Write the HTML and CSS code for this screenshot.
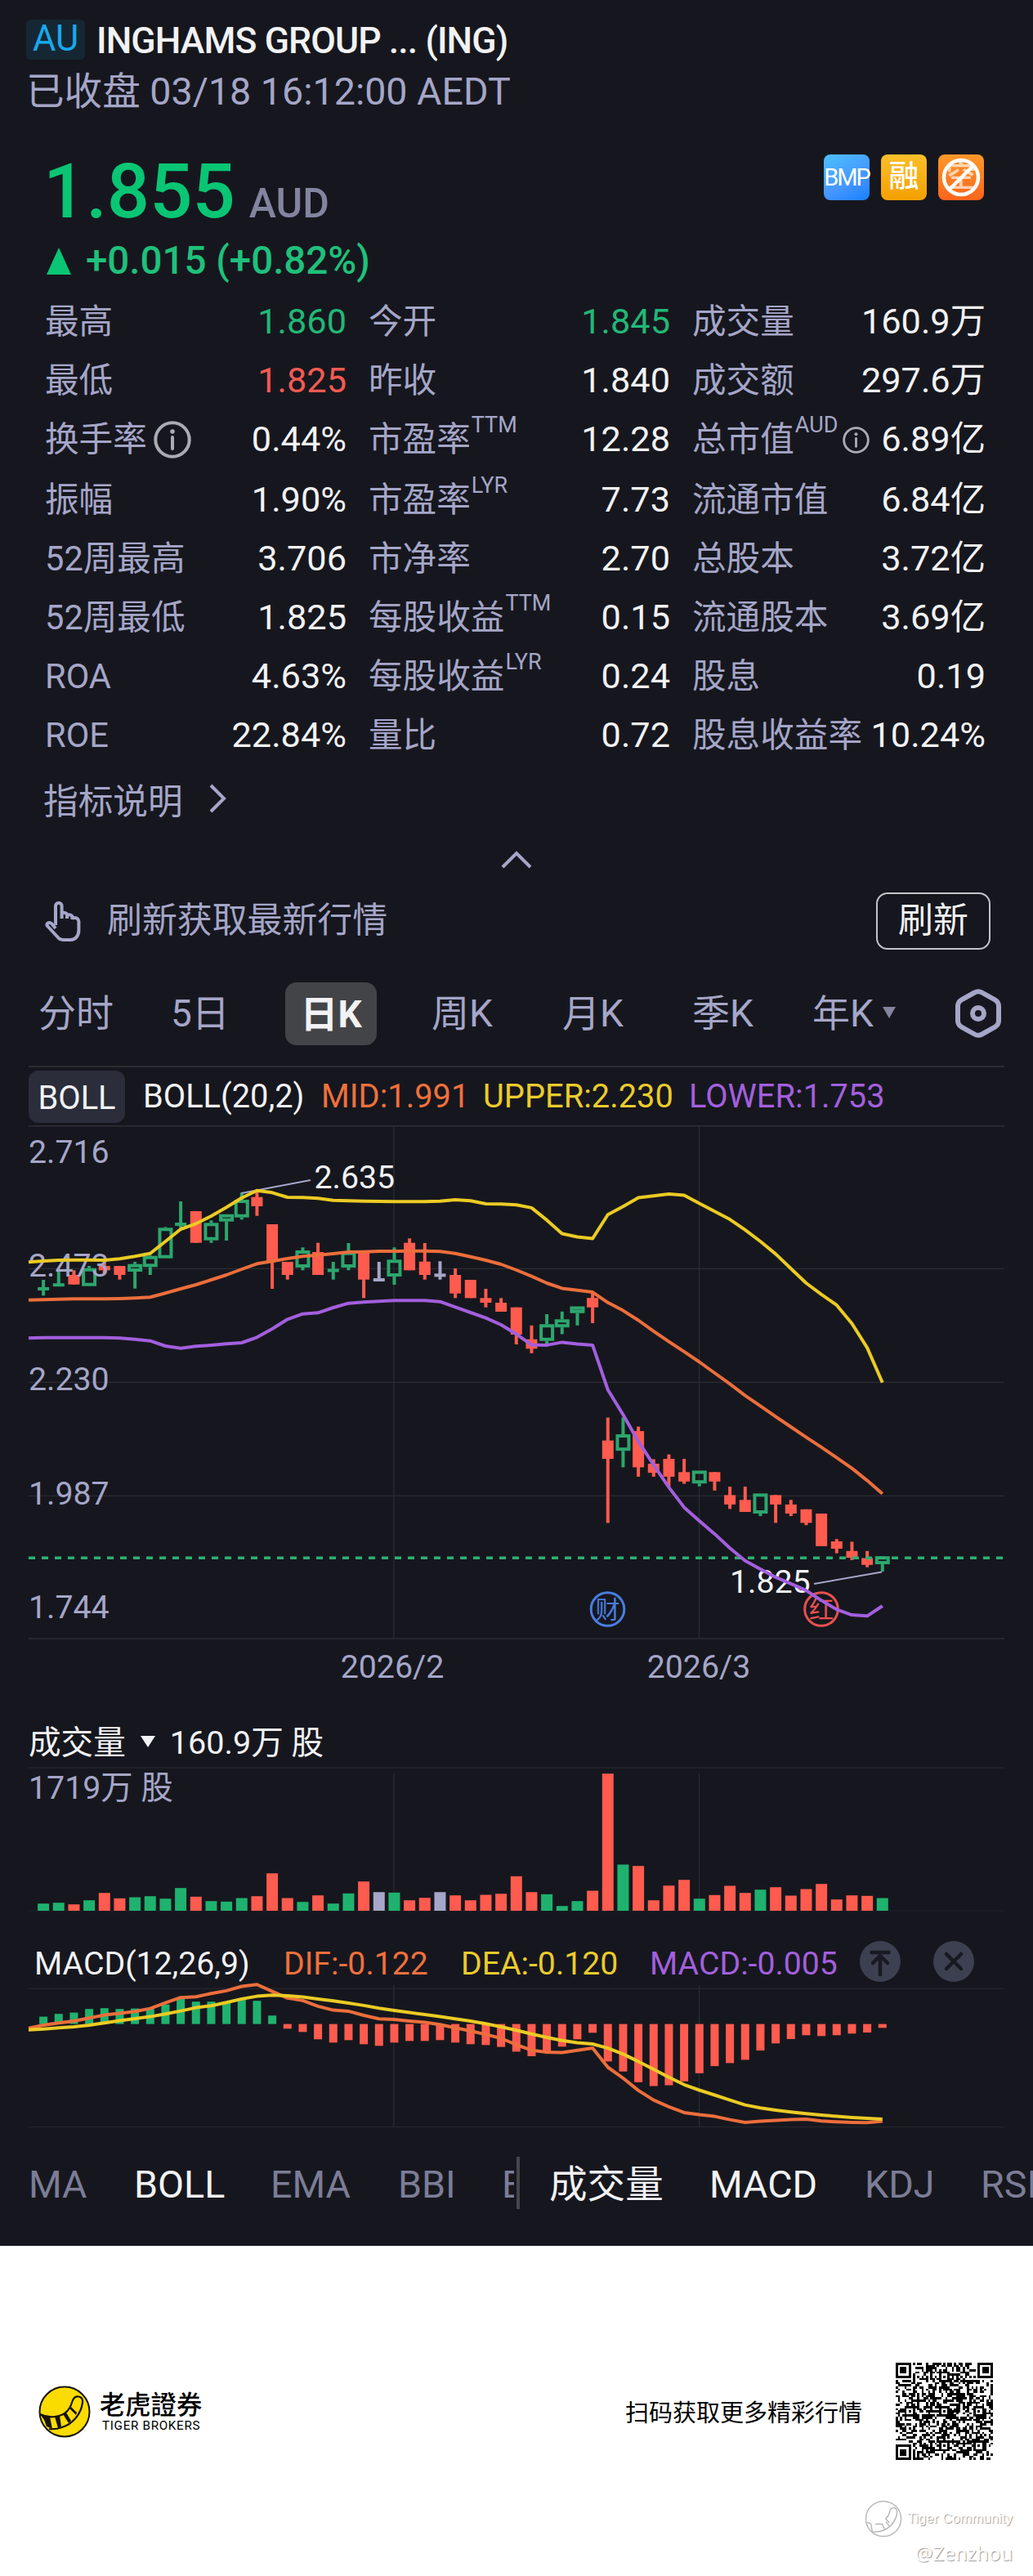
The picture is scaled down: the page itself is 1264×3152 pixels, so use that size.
FILE: index.html
```html
<!DOCTYPE html>
<html lang="zh-CN">

<head>
    <meta charset="UTF-8">
    <meta name="viewport" content="width=device-width, initial-scale=1.0">
    <title>INGHAMS GROUP (ING)</title>
    <link rel="stylesheet" href="styles.css">
</head>

<body>
    <div class="quote-page">
        <div class="header">
            <div class="title-row">
                <span class="market">AU</span>
                <h1>INGHAMS GROUP ... (ING)</h1>
            </div>
            <div class="status">已收盘 03/18 16:12:00 AEDT</div>
        </div>

        <div class="price-box">
            <div class="price-row">
                <span class="price">1.855</span>
                <span class="currency">AUD</span>
                <div class="badges">
                    <span class="badge blue">BMP</span>
                    <span class="badge gold">融</span>
                    <span class="badge orange">
                        <span class="short">空</span>
                        <svg viewBox="0 0 56 56"><circle cx="28" cy="28" r="21" /><path d="M42.5 14 14 42.5" /></svg>
                    </span>
                </div>
            </div>
            <div class="change">
                <svg width="30" height="33" viewBox="0 0 30 33"><path d="M15 0 30 33H0Z" fill="#09c574" /></svg>
                <span>+0.015 (+0.82%)</span>
            </div>
        </div>

        <div class="stats">
            <div class="stat"><span>最高</span><b class="up">1.860</b></div>
            <div class="stat"><span>今开</span><b class="up">1.845</b></div>
            <div class="stat"><span>成交量</span><b>160.9万</b></div>
            <div class="stat"><span>最低</span><b class="down">1.825</b></div>
            <div class="stat"><span>昨收</span><b>1.840</b></div>
            <div class="stat"><span>成交额</span><b>297.6万</b></div>
            <div class="stat"><span>换手率</span><svg class="info" viewBox="0 0 46 46"><circle cx="23" cy="23" r="20.7" /><circle class="dot" cx="23" cy="13" r="2.8" /><path d="M23 20v14" /></svg><b>0.44%</b></div>
            <div class="stat"><span>市盈率<sup>TTM</sup></span><b>12.28</b></div>
            <div class="stat"><span>总市值<sup>AUD</sup></span><svg class="info small" viewBox="0 0 46 46"><circle cx="23" cy="23" r="20.7" /><circle class="dot" cx="23" cy="13" r="2.8" /><path d="M23 20v14" /></svg><b>6.89亿</b></div>
            <div class="stat"><span>振幅</span><b>1.90%</b></div>
            <div class="stat"><span>市盈率<sup>LYR</sup></span><b>7.73</b></div>
            <div class="stat"><span>流通市值</span><b>6.84亿</b></div>
            <div class="stat"><span>52周最高</span><b>3.706</b></div>
            <div class="stat"><span>市净率</span><b>2.70</b></div>
            <div class="stat"><span>总股本</span><b>3.72亿</b></div>
            <div class="stat"><span>52周最低</span><b>1.825</b></div>
            <div class="stat"><span>每股收益<sup>TTM</sup></span><b>0.15</b></div>
            <div class="stat"><span>流通股本</span><b>3.69亿</b></div>
            <div class="stat"><span>ROA</span><b>4.63%</b></div>
            <div class="stat"><span>每股收益<sup>LYR</sup></span><b>0.24</b></div>
            <div class="stat"><span>股息</span><b>0.19</b></div>
            <div class="stat"><span>ROE</span><b>22.84%</b></div>
            <div class="stat"><span>量比</span><b>0.72</b></div>
            <div class="stat"><span>股息收益率</span><b>10.24%</b></div>
        </div>

        <div class="explain">
            <span>指标说明</span>
            <svg width="22" height="38" viewBox="0 0 22 38"><path d="M3 3 19 19 3 35" /></svg>
        </div>
        <div class="collapse">
            <svg width="38" height="22" viewBox="0 0 38 22"><path d="M2 20 19 3 36 20" /></svg>
        </div>

        <div class="refresh">
            <svg width="44" height="50" viewBox="0 0 44 50"><path d="M13 30V6.500a3.800 3.800 0 0 1 7.600 0V22M20.600 21v-5.500q3.200-2 6.400 1V22M27 21v-3q3.200-2 6.400 1v4M33.400 21.500q7-2 8 4V36c0 7-4 12-10 12H22c-3 0-5-1-7-4L2.500 30.500C2 27 6 26 8.500 28.500L13 34" /></svg>
            <span>刷新获取最新行情</span>
            <button>刷新</button>
        </div>

        <div class="periods">
            <span>分时</span>
            <span>5日</span>
            <span class="active">日K</span>
            <span>周K</span>
            <span>月K</span>
            <span>季K</span>
            <span class="more">年K<svg width="18" height="14" viewBox="0 0 18 14"><path d="M1 0H17L9 14Z" fill="#83849f" /></svg></span>
            <svg class="hex" width="58" height="60" viewBox="0 0 58 60"><path d="M24.500 4.500q4.500-2.500 9 0L49 13q5 3 5 8v18q0 5-5 8l-15.500 8.500q-4.500 2.500-9 0L9 47q-5-3-5-8V21q0-5 5-8Z" /><circle cx="29" cy="30" r="7" /></svg>
        </div>

        <div class="legend boll">
            <span class="tag">BOLL</span>
            <span>BOLL(20,2)</span>
            <span class="mid">MID:1.991</span>
            <span class="upper">UPPER:2.230</span>
            <span class="lower">LOWER:1.753</span>
        </div>
        <svg id="kline" width="1264" height="703" viewBox="0 0 1264 703"></svg>

        <div class="volume-title">
            <span>成交量</span>
            <svg width="18" height="14" viewBox="0 0 18 14"><path d="M0 0H18L9 14Z" fill="#f2f2f4" /></svg>
            <span>160.9万 股</span>
        </div>
        <svg id="volume" width="1264" height="196" viewBox="0 0 1264 196"></svg>

        <div class="legend macd">
            <span>MACD(12,26,9)</span>
            <span class="mid">DIF:-0.122</span>
            <span class="upper">DEA:-0.120</span>
            <span class="lower">MACD:-0.005</span>
            <svg width="50" height="50" viewBox="0 0 50 50"><circle cx="25" cy="25" r="25" /><path d="M14.500 14h21M25 41V19M16 27l9-9 9 9" /></svg>
            <svg width="50" height="50" viewBox="0 0 50 50"><circle cx="25" cy="25" r="25" /><path d="m16 16 18 18M34 16 16 34" /></svg>
        </div>
        <svg id="macd" width="1264" height="190" viewBox="0 0 1264 190"></svg>

        <div class="indicators">
            <div class="main">
                <span>MA</span>
                <span class="on">BOLL</span>
                <span>EMA</span>
                <span>BBI</span>
                <span class="cut">ENE</span>
            </div>
            <div class="sub">
                <span class="on">成交量</span>
                <span class="on">MACD</span>
                <span>KDJ</span>
                <span class="cut">RSI</span>
            </div>
        </div>
    </div>

    <div class="footer">
        <div class="brand">
            <svg width="64" height="64" viewBox="0 0 64 64">
                <circle cx="32" cy="32" r="30.500" fill="#fbdc00" stroke="#17130b" stroke-width="2" />
                <path d="M2 35C12 40 24 39 32 34C38 30 40 24 42 18C45 11 55 12 54 21C52 35 42 47 29 51Q21 54 13 53" fill="none" stroke="#17130b" stroke-width="2.200" />
                <path d="M2 35 14 38 17 53 10 50 7 42ZM20 38 26 37 28 50 24 52ZM30 35 34 33 40 43 37 46ZM38 28 40 26 47 33 46 36Z" fill="#17130b" />
            </svg>
            <div class="brand-name">
                <strong>老虎證券</strong>
                <span>TIGER BROKERS</span>
            </div>
        </div>
        <div class="scan">
            <span>扫码获取更多精彩行情</span>
            <svg id="qr" width="119" height="119" viewBox="0 0 45 45" shape-rendering="crispEdges"></svg>
        </div>
        <div class="watermark">
            <div class="community">
                <svg width="46" height="46" viewBox="0 0 64 64"><circle cx="32" cy="32" r="30" /><path d="M4 39q6-1 7 3l2 12q18 2 31-10c10-10 13-23 10-28s-10-3-11 3-5 11-7 13l6 7M18 41h12l5 10M36 37l6 7" /></svg>
                <span>Tiger Community</span>
            </div>
            <div class="author">@Zenzhou</div>
        </div>
    </div>

    <script src="chart.js"></script>
</body>

</html>
```
FILE: styles.css
```css
* {
    box-sizing: border-box;
}

body {
    margin: 0;
    width: 1264px;
    background-color: #fff;
    font-family: Roboto, "Noto Sans CJK SC", sans-serif;
    overflow-x: hidden;
}

svg {
    display: block;
    flex-shrink: 0;
}

.quote-page {
    height: 2748px;
    background-color: #16171e;
    color: #f2f2f4;
    overflow: hidden;
}

.header {
    height: 170px;
    padding: 24px 32px 0;
}

.title-row {
    display: flex;
    align-items: center;
    height: 49px;
}

.market {
    width: 72px;
    height: 49px;
    margin-right: 14px;
    border-radius: 6px;
    background-color: #152733;
    color: #18a8ee;
    font-size: 43.5px;
    line-height: 47px;
    text-align: center;
}

h1 {
    margin: 0;
    padding-top: 3px;
    font-size: 44.5px;
    font-weight: 500;
    line-height: 49px;
    letter-spacing: -0.9px;
}

.status {
    margin-top: 12px;
    color: #a5a6c8;
    font-size: 46.6px;
    line-height: 54px;
}

.price-box {
    height: 188px;
    padding: 0 57px;
}

.price-row {
    display: flex;
    align-items: baseline;
    height: 120px;
    line-height: 130px;
}

.price {
    margin-left: -4px;
    color: #09c574;
    font-size: 92px;
    font-weight: 500;
}

.currency {
    margin-left: 17px;
    color: #83849f;
    font-size: 50px;
    font-weight: 500;
}

.badges {
    display: flex;
    align-self: flex-start;
    gap: 14px;
    margin: 19px 3px 0 auto;
}

.badge {
    position: relative;
    width: 56px;
    height: 56px;
    border-radius: 8px;
    color: #fff;
    font-size: 37px;
    font-weight: 500;
    line-height: 56px;
    text-align: center;
}

.blue {
    background: linear-gradient(150deg, #4dc0fa, #4596ff 60%, #1780ff);
    font-size: 29px;
    font-weight: 400;
    letter-spacing: -2px;
}

.gold {
    background: linear-gradient(#fbbf2b, #f4a000);
}

.orange {
    background: linear-gradient(#ff9828, #fb651c);
}

.short {
    opacity: 0.65;
}

.badge svg {
    position: absolute;
    top: 0;
    left: 0;
    fill: none;
    stroke: #fff;
    stroke-width: 4.5;
}

.change {
    display: flex;
    align-items: center;
    height: 58px;
    color: #1fc07b;
    font-size: 47.5px;
    font-weight: 500;
    line-height: 56px;
}

.change span {
    margin-left: 18px;
}

.stats {
    display: grid;
    grid-template-columns: 369px 369px 359px;
    grid-template-rows: 72px 72px 74px repeat(5, 72px);
    column-gap: 27px;
    padding-left: 55px;
}

.stat {
    display: flex;
    align-items: baseline;
    height: 72px;
    color: #a5a6c8;
    font-size: 41.6px;
    line-height: 72px;
    white-space: nowrap;
}

.stat b {
    margin-left: auto;
    color: #f2f2f4;
    font-size: 43.3px;
    font-weight: 400;
}

.stat .up {
    color: #22b877;
}

.stat .down {
    color: #f35b52;
}

.stat sup {
    position: relative;
    top: -23px;
    margin-left: 1px;
    font-size: 27px;
    line-height: 0;
    vertical-align: baseline;
}

.info {
    align-self: center;
    width: 46px;
    height: 46px;
    margin-left: 8px;
    fill: none;
    stroke: #a9abb5;
    stroke-width: 4;
    stroke-linecap: round;
}

.info .dot {
    fill: #a9abb5;
    stroke: none;
}

.info.small {
    width: 33px;
    height: 33px;
    margin-left: 6px;
}

.explain {
    display: flex;
    align-items: center;
    height: 90px;
    margin-top: -4px;
    padding-left: 53px;
    color: #a5a6c8;
    font-size: 42.7px;
}

.explain svg {
    margin-left: 31px;
}

.explain svg,
.collapse svg {
    fill: none;
    stroke: #a5a6c8;
    stroke-width: 4;
}

.collapse {
    display: flex;
    justify-content: center;
    height: 70px;
    padding-top: 19px;
}

.refresh {
    display: flex;
    align-items: center;
    height: 70px;
    padding: 0 52px 0 55px;
    color: #a5a6c8;
    font-size: 42.9px;
    line-height: 62px;
}

.refresh span {
    padding-bottom: 2px;
}

.refresh svg {
    margin-right: 32px;
    fill: none;
    stroke: #a5a6c8;
    stroke-width: 4;
    stroke-linejoin: round;
}

.refresh button {
    width: 140px;
    height: 70px;
    margin-left: auto;
    padding: 0 0 2px;
    border: 2px solid #c4c4c8;
    border-radius: 14px;
    background: none;
    color: #f2f2f4;
    font: inherit;
}

.periods {
    display: grid;
    grid-template-columns: 162px 140px 179px 160px 159px 147px 174px 60px;
    align-items: center;
    height: 142px;
    padding: 14px 0 0 47px;
    color: #a5a6c8;
    font-size: 46px;
    line-height: 79px;
}

.periods .active {
    width: 112px;
    height: 77px;
    border-radius: 14px;
    background-color: #434448;
    color: #f2f2f4;
    font-weight: 700;
    text-align: center;
}

.more {
    display: flex;
    align-items: center;
}

.more svg {
    margin: -2px 0 0 10px;
}

.hex {
    fill: none;
    stroke: #a5a6c8;
    stroke-width: 6;
}

.legend {
    display: grid;
    align-items: center;
    font-size: 39.2px;
    white-space: nowrap;
}

.boll {
    grid-template-columns: 140px 218px 198px 252px 300px;
    height: 73px;
    margin-left: 35px;
    margin-right: 35px;
    border-top: 2px solid #2b2c32;
    font-size: 39.8px;
    line-height: 68px;
}

.boll .tag {
    width: 118px;
    height: 64px;
    border-radius: 12px;
    background-color: #2b2d3b;
    line-height: 67px;
    text-align: center;
}

.mid {
    color: #f0713c;
}

.upper {
    color: #ebcc2c;
}

.lower {
    color: #a35fde;
}

#kline text,
#volume text {
    fill: #a5a6c8;
    font-size: 39.3px;
}

#kline .mark {
    fill: #f2f2f4;
}

.volume-title {
    display: flex;
    align-items: center;
    height: 82px;
    padding: 23px 0 0 35px;
    font-size: 39.6px;
    line-height: 60px;
}

.volume-title svg {
    margin: -3px 18px 0;
}

.macd {
    grid-template-columns: 305px 217px 231px 257px 90px 60px;
    height: 52px;
    margin: 16px 0 -7px 42px;
}

.macd span {
    padding-top: 6px;
}

.legend circle {
    fill: #3d4050;
}

.legend path {
    fill: none;
    stroke: #181922;
    stroke-width: 4.5;
    stroke-linecap: round;
}

.indicators {
    display: flex;
    height: 64px;
    margin-top: 30px;
    color: #7c7d97;
    font-size: 46.6px;
    line-height: 68px;
}

.main,
.sub {
    display: grid;
    overflow: hidden;
    white-space: nowrap;
}

.main {
    grid-template-columns: 129px 167px 156px 127px 15px;
    width: 636px;
    padding-left: 35px;
    border-right: 4px solid #45464c;
}

.sub {
    grid-template-columns: 196px 190px 142px 64px;
    width: 628px;
    padding-left: 36px;
}

.cut {
    overflow: hidden;
}

.on {
    color: #f2f2f4;
}

.footer {
    height: 404px;
    padding: 143px 49px 0 47px;
    display: grid;
    grid-template-columns: 1fr auto;
    grid-template-rows: 119px 1fr;
    color: #000;
}

.brand,
.scan {
    display: flex;
    align-items: center;
}

.brand-name {
    margin-left: 11px;
    padding-bottom: 2px;
}

.brand-name strong {
    display: block;
    font-family: "Noto Sans CJK TC", sans-serif;
    font-size: 31.3px;
    font-weight: 500;
    line-height: 36px;
}

.brand-name span {
    display: block;
    margin-left: 3px;
    font-size: 15.2px;
    letter-spacing: 0.7px;
    line-height: 18px;
}

.scan span {
    margin-right: 41px;
    padding-bottom: 2px;
    font-size: 29px;
}

.watermark {
    grid-column: 1 / 3;
    margin: 49px -24px 0 0;
    color: #fff;
    text-align: right;
    text-shadow: 1px 1px 1px #999;
}

.community {
    display: flex;
    align-items: center;
    justify-content: flex-end;
    font-family: "Liberation Sans", sans-serif;
    font-size: 17px;
}

.community svg {
    margin-right: 6px;
    fill: none;
    stroke: #b8b8b8;
    stroke-width: 2;
}

.author {
    font-family: "Noto Sans", sans-serif;
    font-size: 24px;
    line-height: 38px;
}
```
FILE: chart.js
```javascript
const GREEN = '#1fb26e';
const RED = '#ff5b4e';
const GREY = '#a5a6c8';
const FIRST_X = 53.1;
const STEP = 18.667;

// g = up, r = down, n = unchanged
const trend = 'ggrgrrggggrgggrrrgrggrngrrnrrrrrrgggrrgrrrrgrrrgrrrrrrrg';

// high, body top, body bottom, low
const candles = [
    [189, 198.3, 201.7, 208.3], [176.3, 193.7, 196.7, 196.7], [177.3, 183, 194.7, 194.7], [172, 174.7, 196.7, 196.7],
    [166.3, 172, 177.3, 181.3], [172, 172, 183, 188.7], [167, 169.7, 179, 199.7], [158.7, 159.7, 173.3, 183],
    [124.3, 125.3, 162.7, 162.7], [93, 119.3, 122.7, 125.3], [105, 105, 143.7, 143.7], [116.3, 119.3, 140.7, 143.7],
    [108.7, 108.7, 117.7, 141], [82.3, 91, 112.7, 115.3], [81.3, 87.7, 99, 110.7], [121, 121, 167, 200],
    [167, 167, 183, 188.7], [149.3, 153, 174, 177.3], [143.7, 155, 183, 183], [167, 176, 179, 188.7],
    [144, 154.7, 174, 177.3], [154.7, 154.7, 188.7, 211.3], [167, 187.3, 190.7, 190.7], [149.3, 164.3, 185, 195],
    [138.3, 143.7, 177.3, 177.3], [144, 166.7, 183, 188.7], [166.3, 181.7, 185, 188.7], [175, 183, 205.7, 211.3],
    [189, 189, 211.3, 211.3], [200, 211.3, 217, 222.7], [211.3, 217, 228, 228], [222.7, 222.7, 256, 268],
    [244.8, 261.8, 273.3, 278.8], [231, 243.3, 263.8, 267], [227.8, 237.3, 247.2, 255.5], [221.5, 221.5, 229.8, 244.8],
    [205.3, 211.2, 222.7, 242], [357.5, 385.6, 408.1, 486.4], [357.5, 378, 398.2, 418.4], [368.6, 374.1, 418.4, 429.9],
    [408.5, 414, 425.1, 429.9], [402.6, 408.1, 429.9, 442.1], [408.1, 424.3, 435.8, 438.6], [422.4, 422.4, 438.2, 441.7],
    [424.3, 424.3, 435.8, 446.9], [442.1, 452.4, 463.9, 469.4], [442.1, 458.3, 473, 473], [450.4, 450.4, 475, 478.1],
    [452.4, 452.4, 463.9, 486.4], [458.3, 463.9, 475, 478.1], [469.8, 469.8, 486.4, 489.2], [475, 475, 514.9, 514.9],
    [506.2, 509, 518, 523.6], [509.4, 520.8, 529.1, 531.9], [520.8, 529.5, 537.8, 540.6], [527.2, 527.2, 537, 546.1]
];

// the lines start one step before the first candle
const upper = [167.3, 166, 165, 164.7, 164.8, 165, 163.3, 160.3, 156.7, 142, 127, 120.3, 111, 100.3, 88.7, 79.7, 82.3, 88, 88.3, 89.3, 91.7, 92.3, 92.7, 93, 93.3, 93.3, 93.3, 92.7, 91, 92.3, 96, 96.3, 97.3, 100.9, 115.9, 132.5, 136.5, 138.5, 109.2, 99.3, 88.6, 86.3, 83.9, 85.5, 95.4, 105.2, 115.1, 127.8, 142, 157.4, 175.2, 193, 206.9, 219.9, 242.5, 272.1, 314.8];
const mid = [213.7, 213.3, 212.7, 212.3, 212.3, 212.3, 212, 211.3, 210.3, 205.3, 200, 195, 189, 183, 176, 169.3, 166.3, 163, 160.3, 158.7, 157, 155, 154.7, 154, 154, 153.7, 153.7, 154.3, 156.7, 160.7, 165, 170, 177, 184.7, 193, 199.4, 201.7, 204.1, 216.8, 226.6, 238.5, 251.9, 264.6, 276.9, 289.5, 303, 316.4, 330.6, 343.3, 356.3, 369, 381.6, 393.9, 406.6, 419.6, 434.6, 450.8];
const lower = [260.3, 259.7, 259.7, 259.7, 259.7, 259.7, 260.3, 261.7, 263.7, 270, 272.7, 270.3, 269, 267.3, 266, 259.3, 249, 237.3, 230.7, 229.3, 223, 217.7, 216.3, 215.3, 214.3, 214.3, 214.3, 215.7, 222.3, 229, 235.7, 244, 255.3, 268.6, 268.9, 265.4, 267.4, 268.9, 323.5, 354, 386.8, 415.3, 442.9, 467.4, 484, 499.9, 517.3, 532.7, 543, 552.9, 560.8, 569.1, 581.3, 592.4, 599.1, 600.3, 588];

const volumes = [8.8, 9.8, 7.8, 12.8, 21.8, 15.2, 16.5, 17.8, 14.8, 27.8, 17.2, 11.8, 11.2, 15.5, 17.8, 45.8, 15.5, 10.8, 18.8, 8.8, 21.2, 35.8, 22.8, 22.2, 12.8, 15.8, 22.8, 18.8, 12.8, 19.5, 20.8, 42.2, 22.8, 20.2, 5.8, 11.8, 24.5, 167.8, 56.5, 54.8, 12.8, 30.8, 37.8, 14.8, 19.2, 30.5, 21.8, 25.8, 28.8, 18.5, 26.5, 32.8, 13.8, 18.8, 18.2, 15.5];

const macd = [9, 12.4, 14, 18.4, 19.4, 18.4, 19, 19.5, 24, 30.7, 27.4, 27.4, 25.7, 30, 28.4, 10.4, -5.7, -9.7, -18.7, -22.7, -19.7, -24.7, -26.7, -22.7, -20.7, -20.7, -19.7, -22.7, -24.7, -25.7, -28, -33.8, -39.4, -35.4, -27.7, -18.7, -10.7, -45.8, -58.1, -71.2, -75.9, -74.9, -70.2, -60.2, -51.5, -47.8, -43.8, -32.4, -23.7, -18.4, -13.7, -14.7, -13.7, -11.7, -10.4, -4.7];
const dif = [62.7, 59, 56.3, 54, 50.3, 46.6, 44.6, 42.3, 38.6, 31.6, 25.2, 24.2, 20.2, 16.9, 11.5, 9.2, 17.6, 25.9, 28.9, 35.9, 40.6, 41.9, 47, 51.3, 52, 54, 55.6, 58.3, 62.3, 66, 70.4, 75, 83, 89.7, 92.1, 92.4, 89.7, 87.1, 110.5, 123.8, 138.9, 150.6, 158.9, 165.9, 168.6, 170.6, 174.6, 178, 176.6, 175.6, 174.6, 173.9, 176.3, 177.3, 178, 178.3, 176.6];
const dea = [64.7, 63.7, 62.3, 61, 59, 56.3, 53.6, 51, 48.6, 45.3, 41.6, 37.6, 35.3, 31.3, 26.9, 23.6, 22.2, 22.9, 24.6, 26.9, 29.2, 31.9, 34.9, 38.3, 40.9, 43.6, 46, 48.6, 51.3, 54, 57.3, 61, 65.3, 69.7, 74, 77.7, 80.4, 82, 87.1, 94.4, 103.4, 113.1, 122.8, 131.8, 138.5, 144.5, 150.6, 156.6, 160.2, 162.9, 165.3, 167.3, 168.9, 170.6, 171.9, 172.9, 173.9];

const xAt = i => FIRST_X + STEP * i;
const colorOf = i => ({ g: GREEN, r: RED, n: GREY })[trend[i]];

function line(x1, y1, x2, y2, color, width) {
    return `<line x1="${x1}" y1="${y1}" x2="${x2}" y2="${y2}" stroke="${color}" stroke-width="${width}"/>`;
}

function rect(x, y, w, h, color) {
    return `<rect x="${x}" y="${y}" width="${w}" height="${h}" fill="${color}"/>`;
}

function curve(values, color) {
    const points = values.map((y, i) => Math.max(35, xAt(i - 1)) + ',' + y).join(' ');
    return `<polyline points="${points}" fill="none" stroke="${color}" stroke-width="4" stroke-linejoin="round"/>`;
}

function event(x, color, text) {
    return `<circle cx="${x}" cy="592" r="20.3" fill="none" stroke="${color}" stroke-width="3"/>` +
        `<text x="${x}" y="603" text-anchor="middle" style="fill:${color};font-size:30px">${text}</text>`;
}

function drawKline() {
    let out = line(35, 0.5, 1229, 0.5, '#2f3036', 2);
    [175.3, 314.3, 453.3, 628].forEach(y => out += line(35, y, 1229, y, '#2b2c34', 1.3));
    [482, 855.5].forEach(x => out += line(x, 0, x, 628, '#2b2c34', 1.3));
    candles.forEach(([high, top, bottom, low], i) => {
        const x = xAt(i);
        const color = trend[i] === 'g' ? '#2ca66d' : colorOf(i);
        if (bottom - top < 4) {
            out += line(x, high, x, low, color, 4) + line(x - 7, (top + bottom) / 2, x + 7, (top + bottom) / 2, color, 4);
        } else if (trend[i] === 'g') {
            out += line(x, high, x, top, color, 4) + line(x, bottom, x, low, color, 4);
            out += `<rect x="${x - 7}" y="${top + 2}" width="14" height="${bottom - top - 4}" fill="none" stroke="${color}" stroke-width="4"/>`;
        } else {
            out += line(x, high, x, low, color, 4) + rect(x - 7, top, 14, bottom - top, color);
        }
    });
    out += '<line x1="35" y1="529.3" x2="1229" y2="529.3" stroke="#2cb173" stroke-width="3.6" stroke-dasharray="8 8"/>';
    ['2.716', '2.473', '2.230', '1.987', '1.744'].forEach((t, i) => {
        out += `<text x="35" y="${46 + i * 139.2}">${t}</text>`;
    });
    out += event(743.5, '#4a7de0', '财') + event(1005, '#e9504f', '红');
    out += '<text class="mark" x="384.500" y="76.500">2.635</text><text class="mark" x="893" y="571.500">1.825</text>';
    out += line(295.5, 83, 380, 67, GREY, 2) + line(996, 561, 1079, 546.5, GREY, 2);
    out += curve(mid, '#ec6e3c') + curve(upper, '#ebcb24') + curve(lower, '#a35fde');
    out += '<text x="480" y="676" text-anchor="middle">2026/2</text><text x="855" y="676" text-anchor="middle">2026/3</text>';
    document.getElementById('kline').innerHTML = out;
}

function drawVolume() {
    const base = 176;
    let out = line(35, 1, 1229, 1, '#22232b', 1.5) + line(35, base, 1229, base, '#1d1e26', 1.5);
    [482, 855.5].forEach(x => out += line(x, 8, x, base, '#2b2c34', 1.3));
    volumes.forEach((v, i) => out += rect(xAt(i) - 7, base - v, 14, v, colorOf(i)));
    out += '<text x="35" y="39">1719万 股</text>';
    document.getElementById('volume').innerHTML = out;
}

function drawMacd() {
    const base = 57.6;
    let out = line(35, 14.3, 1229, 14.3, '#22232b', 1.5) + line(35, 183.6, 1229, 183.6, '#22232b', 1.5);
    [482, 855.5].forEach(x => out += line(x, 10, x, 184, '#2b2c34', 1.3));
    macd.forEach((v, i) => out += rect(xAt(i) - 5, v > 0 ? base - v : base, 10, Math.abs(v), v > 0 ? GREEN : RED));
    out += curve(dif, '#ec6e3c') + curve(dea, '#ebcb24');
    document.getElementById('macd').innerHTML = out;
}

function drawQr() {
    const size = 45;
    let seed = 20260318;
    const random = () => (seed = (seed * 1103515245 + 12345) % 2147483648) / 2147483648;
    const grid = [];
    for (let y = 0; y < size; y++) {
        grid.push([]);
        for (let x = 0; x < size; x++) grid[y].push(x === 6 || y === 6 ? (x + y) % 2 === 0 : random() < 0.5);
    }
    // square rings round a centre: finders and alignment marks
    const ring = (cx, cy, r, light) => {
        for (let y = -r; y <= r; y++) {
            for (let x = -r; x <= r; x++) {
                if (grid[cy + y] && cx + x >= 0 && cx + x < size) {
                    grid[cy + y][cx + x] = !light.includes(Math.max(Math.abs(x), Math.abs(y)));
                }
            }
        }
    };
    [[22, 6], [6, 22], [22, 22], [38, 22], [22, 38], [38, 38]].forEach(([x, y]) => ring(x, y, 2, [1]));
    [[3, 3], [41, 3], [3, 41]].forEach(([x, y]) => ring(x, y, 4, [2, 4]));
    let path = '';
    grid.forEach((row, y) => row.forEach((on, x) => { if (on) path += `M${x} ${y}h1v1h-1z`; }));
    document.getElementById('qr').innerHTML = `<path d="${path}"/>`;
}

drawKline();
drawVolume();
drawMacd();
drawQr();
```
